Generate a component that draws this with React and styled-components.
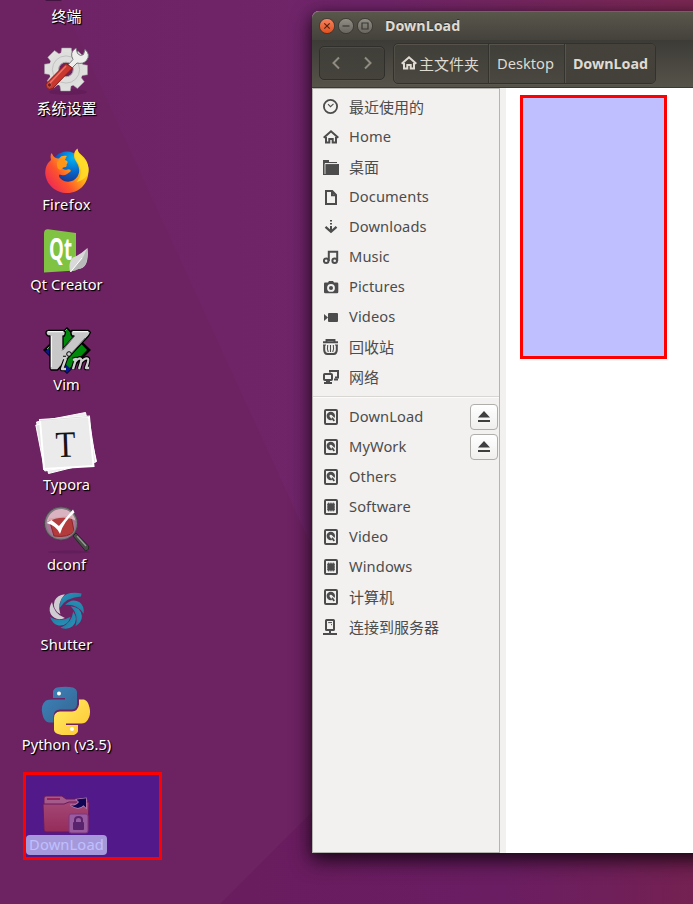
import React from "react";
import styled, { createGlobalStyle } from "styled-components";

const GlobalStyle = createGlobalStyle`
  *, *::before, *::after { box-sizing: border-box; }
  html, body { margin: 0; padding: 0; overflow: hidden; }
`;

const Desktop = styled.div`
  position: relative;
  width: 693px;
  height: 904px;
  overflow: hidden;
  background: #6d2262;
  font-family: "Noto Sans", "Noto Sans CJK SC", sans-serif;
  font-size: 14.67px;
`;

const Wallpaper = styled.svg`
  position: absolute;
  inset: 0;
  display: block;
`;

const IconColumn = styled.div`
  position: relative;
  display: flex;
  flex-direction: column;
  width: 133px;
`;

const Launcher = styled.div`
  display: flex;
  flex-direction: column;
  align-items: center;
  justify-content: flex-end;
  height: ${(p) => p.$height}px;
`;

const LauncherIcon = styled.svg`
  display: block;
  flex: none;
  width: 64px;
  height: 64px;
  margin-left: 1px;
`;

const LauncherLabel = styled.span`
  flex: none;
  height: 20px;
  line-height: 18px;
  padding: 0 3.5px;
  border-radius: 4px;
  white-space: nowrap;
  color: #fff;
  font-size: ${(p) => (p.$cjk ? "15px" : "14.67px")};
  letter-spacing: ${(p) => p.$spacing || 0}px;
  background: ${(p) => (p.$selected ? "#dccdcf" : "transparent")};
  text-shadow: ${(p) => (p.$selected ? "none" : "1px 1px 1px #000, 1px 1px 1px rgba(0,0,0,.7)")};
`;

const RubberBand = styled.div`
  position: absolute;
  left: ${(p) => p.$x}px;
  top: ${(p) => p.$y}px;
  width: ${(p) => p.$w}px;
  height: ${(p) => p.$h}px;
  border: 3px solid #ff0000;
  background: rgba(0, 0, 255, 0.25);
  background-clip: padding-box;
`;

const Window = styled.div`
  position: absolute;
  left: 312px;
  top: 11px;
  width: 420px;
  height: 842px;
  display: flex;
  flex-direction: column;
  border-radius: 7px 0 0 0;
  background: #f2f1ef;
  box-shadow: 0 7px 20px 1px rgba(0, 0, 0, 0.68), 0 2px 12px rgba(0, 0, 0, 0.25);
`;

const TitleBar = styled.div`
  display: flex;
  align-items: center;
  height: 29px;
  padding-left: 7px;
  border-radius: 7px 0 0 0;
  border-top: 1px solid #6a675c;
  background: linear-gradient(#59564b, #44423c);
`;

const WindowControls = styled.div`
  display: flex;
  gap: 3px;
  margin-right: 12px;
`;

const ControlButton = styled.svg`
  display: block;
  width: 16px;
  height: 16px;
`;

const Title = styled.span`
  color: #dfdbd2;
  font-size: 14.3px;
  font-weight: 700;
  line-height: 26px;
  text-shadow: 0 -1px 0 #302f2b;
`;

const Toolbar = styled.div`
  display: flex;
  align-items: flex-start;
  height: 48px;
  padding: 3px 0 0 7px;
  gap: 8px;
  border-bottom: 1px solid #3b3933;
  background: linear-gradient(#3c3b36, #56534a);
`;

const NavGroup = styled.div`
  display: flex;
  align-items: center;
  justify-content: space-between;
  width: 66px;
  height: 34px;
  margin-top: 3px;
  padding: 0 10px;
  border: 1px solid #302f2b;
  border-radius: 5px;
  background: linear-gradient(#403f39, #45433c);
  box-shadow: inset 0 1px 0 #4e4c44, 0 1px 0 #57544b;
`;

const Chevron = styled.svg`
  display: block;
  width: 14px;
  height: 16px;
`;

const PathBar = styled.div`
  display: flex;
  height: 41px;
  border: 1px solid #33312d;
  border-radius: 5px;
  background: linear-gradient(#3f3e38, #4a4840);
  box-shadow: inset 0 1px 0 #56534a, inset 1px 0 0 #504e46, 0 1px 0 #5a574e;
`;

const PathSegment = styled.div`
  display: flex;
  align-items: center;
  justify-content: center;
  gap: 2px;
  width: ${(p) => p.$width}px;
  padding: ${(p) => (p.$active ? "0 0 1px 1px" : "0 2px 1px 0")};
  color: #dfdbd2;
  font-size: ${(p) => p.$size}px;
  font-weight: ${(p) => (p.$active ? 700 : 400)};
  border-left: ${(p) => (p.$first ? "0" : "1px solid #34332e")};
  border-radius: ${(p) => (p.$active ? "0 4px 4px 0" : "0")};
  background: ${(p) => (p.$active ? "linear-gradient(#44423b, #434139)" : "transparent")};
  box-shadow: ${(p) => (p.$first ? "none" : "inset 1px 0 0 #57544c")};
`;

const WindowBody = styled.div`
  display: flex;
  flex: 1;
`;

const Sidebar = styled.div`
  width: 188px;
  padding-top: 3px;
  border: 1px solid #b6b4b0;
  background: #f2f1f0;
`;

const Place = styled.div`
  display: flex;
  align-items: center;
  height: 30px;
  padding: 0 1px 0 10px;
  gap: 10px;
  color: #4c4c4c;
`;

const PlaceIcon = styled.svg`
  display: block;
  flex: none;
  width: 16px;
  height: 16px;
`;

const PlaceLabel = styled.span`
  flex: 1;
  line-height: 20px;
  padding-bottom: ${(p) => (p.$cjk ? 0 : 2)}px;
  white-space: nowrap;
  font-size: ${(p) => (p.$cjk ? "15px" : "14.67px")};
  letter-spacing: ${(p) => (p.$cjk ? 0 : 0.1)}px;
`;

const Divider = styled.div`
  height: 2px;
  margin: 4px 0;
  border-top: 1px solid #d8d6d3;
  background: #fbfbfa;
`;

const EjectButton = styled.div`
  display: flex;
  align-items: center;
  justify-content: center;
  width: 28px;
  height: 26px;
  border: 1px solid #b0aeaa;
  border-radius: 4px;
  background: linear-gradient(#ffffff, #f0efee);
`;

const FileArea = styled.div`
  flex: 1;
  margin-left: 6px;
  background: #fff;
`;

const HomeGlyph = () => (
  <>
    <path d="M.7 8.7 8 2.3l7.3 6.4" fill="none" stroke="currentColor" strokeWidth="2" />
    <path d="M3 8v5.4h3.3V10h3.4v3.4H13V8" fill="none" stroke="currentColor" strokeWidth="2" />
  </>
);

const DriveFrame = () => (
  <rect x="2" y="1" width="12" height="14" rx="1" fill="none" stroke="currentColor" strokeWidth="2" />
);

const placeGlyphs = {
  recent: (
    <g fill="none" stroke="currentColor">
      <circle cx="7.5" cy="7.5" r="6.6" strokeWidth="1.8" />
      <path d="M5 5.2 7.5 7.7l3-2.8" strokeWidth="1.1" />
    </g>
  ),
  home: <HomeGlyph />,
  folder: (
    <g fill="currentColor">
      <path d="M0 1h6v2h8v1.2H2V16H0z" />
      <path d="M3 5h13v11H2V5z" />
      <path d="M2 15V4.6h12" fill="none" stroke="#f2f1f0" strokeWidth=".8" />
    </g>
  ),
  document: <path d="M3 2h6.2L13 6v9H3zM9 2v4.2h4" fill="none" stroke="currentColor" strokeWidth="2" />,
  download: (
    <g fill="currentColor">
      <path d="M7 1h2v1.6H7zM7 4h2v1.6H7zM7 7h2v4H7z" />
      <path d="m2.5 7.8 5.5 5 5.5-5" fill="none" stroke="currentColor" strokeWidth="2.3" />
    </g>
  ),
  music: (
    <g fill="none" stroke="currentColor" strokeWidth="2">
      <circle cx="3.2" cy="11.8" r="2.3" />
      <circle cx="11.7" cy="11.8" r="2.3" />
      <path d="M5.8 12V2.8h8.4V12" />
    </g>
  ),
  camera: (
    <g fill="currentColor">
      <path d="M2 3.6h3L6 2h4l1 1.6h3q1.3 0 1.3 1.2V13q0 1.2-1.3 1.2H2.3Q1 14.2 1 13V4.8Q1 3.6 2 3.6zM8 5a3.900 3.900 0 1 0 0 7.800A3.900 3.900 0 0 0 8 5z" fillRule="evenodd" />
      <circle cx="8" cy="8.9" r="2" />
    </g>
  ),
  video: (
    <g fill="currentColor">
      <rect x="5" y="4" width="10" height="9" rx="1" />
      <path d="M1 5v7l4-3.5z" />
    </g>
  ),
  trash: (
    <g fill="none" stroke="currentColor">
      <path d="M0 3.2h15M3.5 3V1h8v2" strokeWidth="1.9" />
      <path d="M1.2 6v5.2q.3 3.8 3 3.8h6.6q2.7 0 3-3.8V6" strokeWidth="2" />
      <path d="M0 6h3M12 6h3M4.7 6q-.8 4 .6 7M10.3 6q.8 4-.6 7M7.5 6v7" strokeWidth="1.1" />
    </g>
  ),
  network: (
    <g fill="none" stroke="currentColor" strokeWidth="2">
      <path d="M7 3.5V2h8v6.5h-3" />
      <rect x="1" y="5" width="8" height="6" rx=".8" />
      <path d="M1 14h8M5 11v3M11 10.5h4" />
      <path d="M3 12.5h4" />
    </g>
  ),
  disk: (
    <g>
      <DriveFrame />
      <circle cx="7.8" cy="7" r="4.2" fill="currentColor" />
      <circle cx="7.8" cy="7" r="1.3" fill="#f2f1f0" />
      <path d="m8.2 7.5 3.8 4.3" stroke="#f2f1f0" strokeWidth="2.8" />
      <path d="m9 8.8 2.2 3.2" stroke="currentColor" strokeWidth="1.8" />
    </g>
  ),
  chip: (
    <g>
      <DriveFrame />
      <rect x="4.6" y="4.6" width="6.8" height="6.8" fill="currentColor" />
      <path d="M5.5 3.6v8.8M7.2 3.6v8.8M8.9 3.6v8.8M10.600 3.6v8.8M4 5.3h8M4 7.1h8M4 8.9h8M4 10.7h8" stroke="currentColor" strokeWidth=".9" />
    </g>
  ),
  server: (
    <g fill="none" stroke="currentColor">
      <rect x="3" y="1" width="8" height="10" rx=".6" strokeWidth="2" />
      <path d="M7 12v3M0 15h14" strokeWidth="2" />
      <path d="M5.2 3.6h3.8M8 5.7h1" strokeWidth="1" />
    </g>
  ),
};

const teeth = [0, 45, 90, 135, 180, 225, 270, 315];
const blades = [51.4, 102.8, 154.2, 205.7, 257.1, 308.5];

const launcherArt = {
  terminal: <rect x="10" y="52" width="17" height="6" rx="2" fill="#421540" />,
  settings: (
    <g>
      <ellipse cx="33" cy="57" rx="19" ry="3" fill="#3a1035" opacity=".2" />
      <g fill="#e0e0df" stroke="#9d959d" strokeWidth=".5">
        {teeth.map((a) => (
          <path key={a} d="M25 24l1.7-11h9.600L38 24z" transform={`rotate(${a} 31 34.5)`} />
        ))}
      </g>
      <circle cx="31" cy="34.5" r="12.3" fill="none" stroke="#dededd" strokeWidth="10" />
      <circle cx="31" cy="34.5" r="13.6" fill="none" stroke="#b9b9b9" strokeWidth=".8" />
      <circle cx="31" cy="34.5" r="7.3" fill="none" stroke="#a9a9a9" strokeWidth="1" />
      <path d="m33 30 5-5.500q-4-7 3-11.500l1.500 5.500q3 3.500 6 1l1.500-5q6 5 1.500 11-3.500 4-9.500 2.500L37 33z" fill="#eeeeec" stroke="#77777a" strokeWidth="1" />
      <path d="m31 28.500 6.500 4.500-20 20.500q-3.500 2.500-6-1-1.500-3 .7-5z" fill="#c9372f" stroke="#82201f" strokeWidth="1" />
      <path d="m31 31-16 17" stroke="#e8766b" strokeWidth="1.500" />
      <circle cx="14.5" cy="50" r="2" fill="#741c1c" stroke="#e87a70" strokeWidth=".5" />
    </g>
  ),
  firefox: (
    <g>
      <defs>
        <linearGradient id="fox" x1="1" y1="0" x2="0" y2=".8">
          <stop offset="0" stopColor="#fff02e" />
          <stop offset=".4" stopColor="#ffb414" />
          <stop offset=".7" stopColor="#fc532d" />
          <stop offset="1" stopColor="#ed2459" />
        </linearGradient>
        <radialGradient id="globe" cx=".7" cy=".2" r=".9">
          <stop offset="0" stopColor="#01b6f4" />
          <stop offset=".5" stopColor="#0867cb" />
          <stop offset="1" stopColor="#22297f" />
        </radialGradient>
      </defs>
      <circle cx="32" cy="36" r="15.5" fill="url(#globe)" />
      <path d="M16 22.500q-1 4 0 6.500-6 5-5.800 13C11 54 21 62 32 62c13 0 22-10 21.500-24-.3-7-3.500-11-7-14-3-2.500-4-4-4-6.500-4 3-4.500 8-2 12 4 6 5 11 2 16-4 6-12 7-17 2-1.500-1.500-2-3-1-4 5 2 8-.5 11-3 1-1.500-1-2.500-3-2-3 .8-6-.5-5.500-3 .5-2 4-2 5-2.500 1-2 1-3-2-4 0-2 1-3 2-4-4-.5-6 0-8 2.500-3 0-5.500-1-7-5z" fill="url(#fox)" />
      <path d="M42.500 18c-4 5-3 8 0 13 5 7 4 15-1 20 9-2 13-8 12-14-1-8-10-11-11-19z" fill="#ffe12e" opacity=".75" />
      <path d="M22 31q4-4 9-4-3 3-1 5 3 1 1 4-4 0-5 3-5-1-4-8z" fill="#ff9517" />
    </g>
  ),
  qt: (
    <g>
      <path d="M9 22.500Q9 18 13 18.200L41 22v37.500L9 61.500z" fill="#80c342" />
      <text x="14" y="48.5" textLength="23" lengthAdjust="spacingAndGlyphs" fill="#fff" fontFamily="Open Sans, sans-serif" fontWeight="700" fontSize="30">Qt</text>
      <path d="M52.500 37q2 20-9 21-6 1.500-8.500 3-2-10 3-14.500 6-2 14.500-9.500z" fill="#d8d9d8" />
      <path d="m36 60.500 12-14 4-9q2 19-8.500 20.500z" fill="#b7bab8" />
      <path d="m35.500 61 11.500-14" stroke="#fff" strokeWidth="1" />
    </g>
  ),
  vim: (
    <g strokeLinejoin="round">
      <path d="m32 16 24 23-24 24L8 39z" fill="#000" />
      <path d="m32 18 20 21-20 21-20-21z" fill="#008a0c" />
      <path d="m10 40 22 22 4-4L14 38z" fill="#0a168d" />
      <path d="m32 18-20 20" stroke="#36d34d" strokeWidth="1" />
      <path d="M13 19.500h16l1.500 2-1 3.500H28v13l11-13h-2q-2-2-.5-5.500h17l2 2-2 3.500-21 22.500L22.500 59H16l-1-1.500V25h-2q-3-2-1.500-5z" fill="#c8c8c8" stroke="#000" strokeWidth="1.300" />
      <path d="M13 20.700h15M38 20.700h15M16.500 25v31" stroke="#f5f5f5" strokeWidth="1.200" />
      <path d="m27 39.500 12-14M25 55l25-28" stroke="#777" strokeWidth="1" />
      <path d="m31 47-4 11h4M31 47h-3M38 58l3-10-3 1M40 51q4-5 6-3 1 1-2 10M46 51q5-5 7-3 1 1-2 9h3" fill="none" stroke="#000" strokeWidth="4.600" />
      <path d="m31 47-4 11h4M31 47h-3M38 58l3-10-3 1M40 51q4-5 6-3 1 1-2 10M46 51q5-5 7-3 1 1-2 9h3" fill="none" stroke="#d0d0d0" strokeWidth="2.400" />
      <circle cx="34" cy="43" r="2.300" fill="#ccc" stroke="#000" />
    </g>
  ),
  typora: (
    <g>
      <path d="m1.500 11 49-9.500 11 49L13.500 62.500z" fill="#ededed" stroke="#fff" />
      <path d="m.8 14 53-8 7 45-51 9z" fill="#e3e3e3" stroke="#fff" />
      <path d="m5 9 49-3.500L58.500 55 9 58z" fill="#ebebeb" stroke="#fff" strokeWidth="2" />
      <path d="M5 9.500 54 5.500" stroke="#d0d0d0" strokeWidth=".7" />
      <text x="31" y="46" transform="rotate(-2 31 46)" textAnchor="middle" textLength="20" lengthAdjust="spacingAndGlyphs" fill="#151515" fontFamily="Liberation Serif, serif" fontSize="37">T</text>
    </g>
  ),
  dconf: (
    <g>
      <ellipse cx="34" cy="61" rx="21" ry="1.500" fill="#351034" opacity=".2" />
      <path d="m38 45 3-3 12.500 13q1 4-3 5z" fill="#4a4c4a" stroke="#252725" strokeWidth="1" />
      <path d="m42 45 9 10" stroke="#9a9c9a" strokeWidth="1.200" />
      <circle cx="26" cy="32.500" r="15.500" fill="#a87596" />
      <path d="m14 28 22-3 3 15q-5 7-20 5z" fill="#b33b3b" stroke="#8d252a" />
      <path d="M11.500 31Q15 18 27 18q12 1 14 12-12-7-29.500 1z" fill="#e5c4cb" opacity=".8" />
      <circle cx="26" cy="32.500" r="15.700" fill="none" stroke="#7e7c80" strokeWidth="2" />
      <circle cx="26" cy="32.500" r="16.500" fill="none" stroke="#333" strokeWidth=".7" />
      <path d="m11.500 32 5-3 7.500 6 14-16.500 1.500 3q-11 9-14.500 21.500Q22 35 11.500 32z" fill="#fff" />
    </g>
  ),
  shutter: (
    <g>
      <defs>
        <linearGradient id="blade" x1="0" y1="0" x2="1" y2="1">
          <stop offset="0" stopColor="#2a95bd" />
          <stop offset="1" stopColor="#1d6f93" />
        </linearGradient>
      </defs>
      {blades.map((a) => (
        <path
          key={a}
          d="M25.500 37.500Q24 27.500 32.500 24.500q6-1.500 11.500 4-12-1-18.500 9z"
          fill={a > 250 ? "#cfccd2" : "url(#blade)"}
          transform={`rotate(${a} 31.500 40.500)`}
        />
      ))}
      <path d="M25 36.500Q24.500 24 35.500 22q6-.8 11 .5l-.5 3Q32 26 25 36.500z" fill="url(#blade)" />
    </g>
  ),
  python: (
    <g transform="translate(-1 0)">
      <defs>
        <linearGradient id="pyb" x1="0" y1="0" x2="1" y2="1">
          <stop offset="0" stopColor="#3f83bd" />
          <stop offset="1" stopColor="#33668f" />
        </linearGradient>
        <linearGradient id="pyy" x1="0" y1="0" x2="1" y2="1">
          <stop offset="0" stopColor="#ffed68" />
          <stop offset="1" stopColor="#ffc62f" />
        </linearGradient>
      </defs>
      <path d="M19 28v-7q0-3 4-4.500 9-1.500 16 0 4 1.500 4 5V33q0 5-5 5.500H26q-6 0-6.500 6.500v6.500H15q-5-1-6.500-8Q6 34 12 29.500q2-1 7-1h12V27H19z" fill="url(#pyb)" />
      <path d="M45 28.500h5q4 1 5.500 8 2 9-3.500 14.500-2 1.500-7 1.500H32V54h12v6q0 2-4 4-9 1.500-16-1-4-1.500-4-4.500V47q0-6 6-6.500h12q6-.5 7-7z" fill="url(#pyy)" />
      <circle cx="25" cy="22.500" r="2" fill="#fff" />
      <circle cx="38" cy="58" r="2" fill="#fff" />
    </g>
  ),
  folder: (
    <g>
      <defs>
        <linearGradient id="fold" x1="0" y1="0" x2="0" y2="1">
          <stop offset="0" stopColor="#da6048" />
          <stop offset="1" stopColor="#c83b23" />
        </linearGradient>
      </defs>
      <path d="M9 27q0-2 2-2h16l4 3h20q2 0 2 2v10H9z" fill="#dc7966" stroke="#8e202b" strokeWidth="1" />
      <path d="M12 28h13" stroke="#c72d27" strokeWidth="2" />
      <path d="M8 33h21l5-2h20l-1 28q0 2-2 2H11q-2 0-2-2z" fill="url(#fold)" stroke="#8e202b" strokeWidth="1" />
      <path d="M35.500 34q5 1.500 8.500-3l-2.500-2.500 9.500-1.200v9.500l-2.500-2.500q-5 5.500-13-.3z" fill="#130818" stroke="#f2b0a6" strokeWidth="1.400" paintOrder="stroke" />
      <rect x="34" y="43" width="19" height="19" rx="2" fill="#cc7b81" stroke="#a74659" />
      <path d="M40 52v-3q0-3 3.500-3t3.500 3v3" fill="none" stroke="#792f3e" strokeWidth="2" />
      <rect x="38" y="51" width="11" height="8" rx="1" fill="#792f3e" />
    </g>
  ),
};

const launchers = [
  { name: "终端", art: "terminal", height: 27, cjk: true },
  { name: "系统设置", art: "settings", height: 92, cjk: true },
  { name: "Firefox", art: "firefox", height: 96, spacing: 0.25 },
  { name: "Qt Creator", art: "qt", height: 80 },
  { name: "Vim", art: "vim", height: 100 },
  { name: "Typora", art: "typora", height: 100 },
  { name: "dconf", art: "dconf", height: 80 },
  { name: "Shutter", art: "shutter", height: 80, spacing: 0.1 },
  { name: "Python (v3.5)", art: "python", height: 100 },
  { name: "DownLoad", art: "folder", height: 100, spacing: 0.15, selected: true },
];

const bookmarks = [
  { name: "最近使用的", icon: "recent", cjk: true },
  { name: "Home", icon: "home" },
  { name: "桌面", icon: "folder", cjk: true },
  { name: "Documents", icon: "document" },
  { name: "Downloads", icon: "download" },
  { name: "Music", icon: "music" },
  { name: "Pictures", icon: "camera" },
  { name: "Videos", icon: "video" },
  { name: "回收站", icon: "trash", cjk: true },
  { name: "网络", icon: "network", cjk: true },
];

const devices = [
  { name: "DownLoad", icon: "disk", eject: true },
  { name: "MyWork", icon: "disk", eject: true },
  { name: "Others", icon: "disk" },
  { name: "Software", icon: "chip" },
  { name: "Video", icon: "disk" },
  { name: "Windows", icon: "chip" },
  { name: "计算机", icon: "disk", cjk: true },
  { name: "连接到服务器", icon: "server", cjk: true },
];

const PlaceRow = ({ item }) => (
  <Place>
    <PlaceIcon viewBox="0 0 16 16">{placeGlyphs[item.icon]}</PlaceIcon>
    <PlaceLabel $cjk={item.cjk}>{item.name}</PlaceLabel>
    {item.eject && (
      <EjectButton>
        <PlaceIcon viewBox="0 0 16 16">
          <path d="M8 2 14 8.500H2zM2 11h12v2H2z" fill="#3f3f3f" />
        </PlaceIcon>
      </EjectButton>
    )}
  </Place>
);

const WindowButton = ({ close, children }) => (
  <ControlButton viewBox="0 0 16 16">
    <defs>
      <linearGradient id={close ? "ctl-close" : "ctl"} x1="0" y1="0" x2="0" y2="1">
        <stop offset="0" stopColor={close ? "#f58561" : "#918f86"} />
        <stop offset="1" stopColor={close ? "#e14e1c" : "#66645c"} />
      </linearGradient>
    </defs>
    <circle cx="8" cy="8" r="7.6" fill={close ? "url(#ctl-close)" : "url(#ctl)"} stroke="#33322d" strokeWidth=".8" />
    <g fill="none" stroke={close ? "#552310" : "#393832"} strokeWidth="1.2">{children}</g>
  </ControlButton>
);

export default function App() {
  return (
    <>
      <GlobalStyle />
      <Desktop>
        <Wallpaper width="693" height="904" viewBox="0 0 693 904">
          <defs>
            <linearGradient id="wall" x1="0" y1="0" x2="1" y2="0">
              <stop offset="0" stopColor="#6e2366" />
              <stop offset=".5" stopColor="#70256a" />
              <stop offset="1" stopColor="#7b2853" />
            </linearGradient>
            <linearGradient id="wall-low" x1="0" y1="0" x2="1" y2="0">
              <stop offset="0" stopColor="#691c5e" />
              <stop offset=".6" stopColor="#6a1d62" />
              <stop offset="1" stopColor="#742152" />
            </linearGradient>
          </defs>
          <path d="M0 0h693v904H0z" fill="#6d2262" />
          <path d="M61 0h632v904H463L312 547z" fill="url(#wall)" />
          <path d="M220 904 420 704h273v200z" fill="url(#wall-low)" />
        </Wallpaper>

        <IconColumn>
          {launchers.map((l) => (
            <Launcher key={l.art} $height={l.height}>
              <LauncherIcon viewBox="0 0 64 64">{launcherArt[l.art]}</LauncherIcon>
              <LauncherLabel $cjk={l.cjk} $spacing={l.spacing} $selected={l.selected}>
                {l.name}
              </LauncherLabel>
            </Launcher>
          ))}
        </IconColumn>
        <RubberBand $x={23} $y={772} $w={139} $h={88} />

        <Window>
          <TitleBar>
            <WindowControls>
              <WindowButton close>
                <path d="m5.300 5.300 5.400 5.400M10.700 5.300l-5.400 5.400" />
              </WindowButton>
              <WindowButton>
                <path d="M4.500 8h7" />
              </WindowButton>
              <WindowButton>
                <path d="M5 5h6v6H5z" />
              </WindowButton>
            </WindowControls>
            <Title>DownLoad</Title>
          </TitleBar>
          <Toolbar>
            <NavGroup>
              <Chevron viewBox="0 0 14 16">
                <path d="M9 2.500 3.500 8 9 13.500" fill="none" stroke="#8f8c82" strokeWidth="2" />
              </Chevron>
              <Chevron viewBox="0 0 14 16">
                <path d="M5 2.500 10.500 8 5 13.500" fill="none" stroke="#8f8c82" strokeWidth="2" />
              </Chevron>
            </NavGroup>
            <PathBar>
              <PathSegment $first $width={94} $size={15}>
                <PlaceIcon viewBox="0 0 16 16" color="#dfdbd2">
                  <HomeGlyph />
                </PlaceIcon>
                <span>主文件夹</span>
              </PathSegment>
              <PathSegment $width={76} $size={14.67}>Desktop</PathSegment>
              <PathSegment $active $width={91} $size={14.3}>DownLoad</PathSegment>
            </PathBar>
          </Toolbar>
          <WindowBody>
            <Sidebar>
              {bookmarks.map((b) => (
                <PlaceRow key={b.name} item={b} />
              ))}
              <Divider />
              {devices.map((d) => (
                <PlaceRow key={d.name} item={d} />
              ))}
            </Sidebar>
            <FileArea />
          </WindowBody>
        </Window>
        <RubberBand $x={520} $y={95} $w={147} $h={264} />
      </Desktop>
    </>
  );
}
